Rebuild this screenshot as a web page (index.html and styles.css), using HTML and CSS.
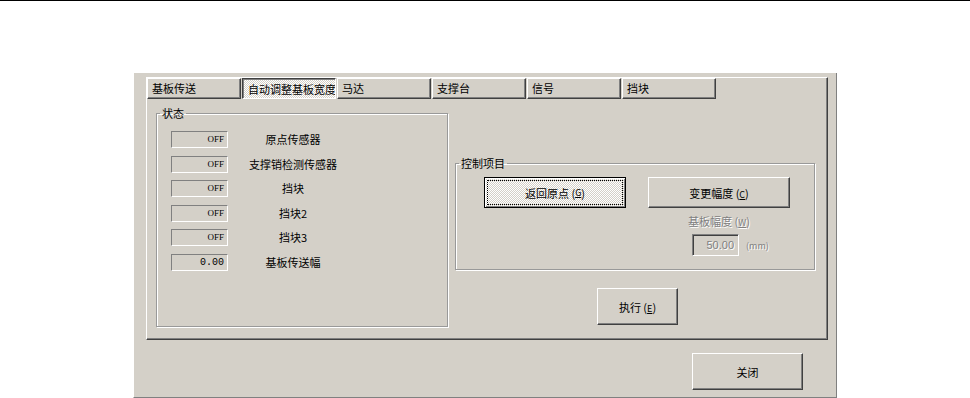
FILE: index.html
```html
<!DOCTYPE html>
<html lang="zh">
<head>
  <meta charset="UTF-8">
  <title>自动调整基板宽度</title>
  <link rel="stylesheet" href="styles.css">
</head>
<body>
  <div class="dialog">
    <div class="tab-panel">
      <div class="tabs">
        <div class="tab">基板传送</div>
        <div class="tab active">自动调整基板宽度</div>
        <div class="tab">马达</div>
        <div class="tab">支撑台</div>
        <div class="tab">信号</div>
        <div class="tab">挡块</div>
      </div>

      <div class="tab-body">
        <!-- Status group -->
        <fieldset class="group status-group">
          <legend>状态</legend>
          <div class="status-list">
            <div class="row"><span class="led">OFF</span><span class="label">原点传感器</span></div>
            <div class="row"><span class="led">OFF</span><span class="label">支撑销检测传感器</span></div>
            <div class="row"><span class="led">OFF</span><span class="label">挡块</span></div>
            <div class="row"><span class="led">OFF</span><span class="label">挡块2</span></div>
            <div class="row"><span class="led">OFF</span><span class="label">挡块3</span></div>
            <div class="row"><span class="led num">0.00</span><span class="label">基板传送幅</span></div>
          </div>
        </fieldset>

        <!-- Control group -->
        <div class="right-col">
          <fieldset class="group ctrl-group">
            <legend>控制项目</legend>
            <div class="ctrl-grid">
              <button class="btn default"><span class="focus">返回原点 (<u>G</u>)</span></button>
              <button class="btn">变更幅度 (<u>C</u>)</button>
              <div></div>
              <div class="width-box">
                <div class="disabled">基板幅度 (<u>W</u>)</div>
                <div class="width-input">
                  <span class="field">50.00</span>
                  <span class="disabled">(mm)</span>
                </div>
              </div>
            </div>
          </fieldset>
          <button class="btn run">执行 (<u>E</u>)</button>
        </div>
      </div>
    </div>

    <div class="footer">
      <button class="btn close">关闭</button>
    </div>
  </div>
</body>
</html>
```

FILE: styles.css
```css
/* Classic Windows dialog look */
body {
  margin: 0;
  background: #fff;
  border-top: 1px solid #000;
  font-family: "Noto Sans CJK SC", "DejaVu Sans", sans-serif;
  font-size: 11px;
  color: #000;
}

.dialog {
  margin: 72px 0 0 133px;
  width: 690px;
  height: 320px;
  padding: 4px 0 0 12px;
  box-sizing: content-box;
  background: #d4d0c8;
  border-left: 1px solid #fff;
  border-right: 1px solid #808080;
  border-bottom: 1px solid #808080;
}

.dialog > * {
  box-sizing: border-box;
}

.tab-panel {
  width: 682px;
  height: 263px;
  border: 1px solid;
  border-color: #fff #404040 #404040 #fff;
  box-shadow: inset -1px -1px 0 #808080;
}

.tabs {
  display: flex;
  gap: 1px;
}

.tab {
  box-sizing: border-box;
  width: 94px;
  height: 21px;
  padding: 2px 0 0 4px;
  line-height: 15px;
  border: 1px solid;
  border-color: #fff #404040 #404040 #fff;
  box-shadow: inset -1px -1px 0 #808080;
  white-space: nowrap;
  overflow: hidden;
}

.tab.active {
  border-color: #404040 #fff #fff #404040;
  box-shadow: inset 1px 1px 0 #808080;
  background: repeating-conic-gradient(#fff 0 25%, #d4d0c8 0 50%) 0 0 / 2px 2px;
  padding: 3px 0 0 5px;
}

.tab-body {
  display: flex;
  align-items: flex-start;
  padding-left: 9px;
  margin-top: 8px;
}

.group {
  box-sizing: border-box;
  margin: 0;
  padding: 0;
  min-width: 0;
  border: 1px solid #999;
  box-shadow: inset 1px 1px 0 #fff, 1px 1px 0 #fff;
}

.group legend {
  margin-left: 3px;
  padding: 0 2px;
  line-height: 12px;
  font-size: 11px;
}

.status-group {
  width: 292px;
  height: 220px;
}

.status-list {
  padding: 12px 0 0 14px;
}

.row {
  display: flex;
  align-items: flex-start;
  height: 24.6px;
}

.led {
  box-sizing: border-box;
  width: 57px;
  height: 17px;
  padding: 1px 3px 0 0;
  border: 1px solid;
  border-color: #808080 #fff #fff #808080;
  font-family: "Liberation Serif", serif;
  font-size: 9px;
  line-height: 13px;
  text-align: right;
}

.led.num {
  font-family: "Liberation Mono", monospace;
  font-size: 10px;
}

.label {
  width: 130px;
  text-align: center;
  line-height: 17px;
}

.right-col {
  margin-left: 7px;
  padding-top: 50px;
}

.ctrl-group {
  width: 360px;
  height: 113px;
}

.ctrl-grid {
  display: grid;
  grid-template-columns: 142px 142px;
  column-gap: 22px;
  margin: 8px 0 0 28px;
}

.btn {
  box-sizing: border-box;
  height: 31px;
  padding: 0;
  font-family: inherit;
  font-size: 11px;
  color: #000;
  background: #d4d0c8;
  border: 1px solid;
  border-color: #fff #404040 #404040 #fff;
  box-shadow: inset -1px -1px 0 #808080;
}

.btn u {
  font-size: 9px;
}

.btn.default {
  border-color: #000;
  box-shadow: inset 1px 1px 0 #fff, inset -1px -1px 0 #808080;
  background: repeating-conic-gradient(#fff 0 25%, #d4d0c8 0 50%) 0 0 / 2px 2px;
  padding: 3px;
}

.focus {
  display: flex;
  align-items: center;
  justify-content: center;
  height: 100%;
  outline: 1px dotted #000;
}

.width-box {
  display: flex;
  flex-direction: column;
  align-items: center;
  margin-top: 6px;
}

.width-box > .disabled {
  line-height: 14px;
}

.width-box u {
  font-size: 9px;
}

.width-input {
  display: flex;
  align-items: center;
  align-self: flex-start;
  gap: 7px;
  margin: 4px 0 0 44px;
}

.field {
  box-sizing: border-box;
  width: 47px;
  height: 22px;
  padding-right: 4px;
  border: 1px solid;
  border-color: #808080 #fff #fff #808080;
  box-shadow: inset 1px 1px 0 #404040;
  text-align: right;
  line-height: 20px;
  font-family: "Liberation Sans", sans-serif;
  font-size: 11px;
  color: #808080;
  text-shadow: 1px 1px 0 #fff;
}

.disabled {
  color: #808080;
  text-shadow: 1px 1px 0 #fff;
}

.width-input .disabled {
  font-size: 9px;
}

.run {
  display: block;
  width: 81px;
  height: 37px;
  margin: 18px 0 0 142px;
}

.footer {
  display: flex;
  justify-content: flex-end;
  padding-right: 33px;
  margin-top: 13px;
}

.close {
  width: 111px;
  height: 37px;
}
```
